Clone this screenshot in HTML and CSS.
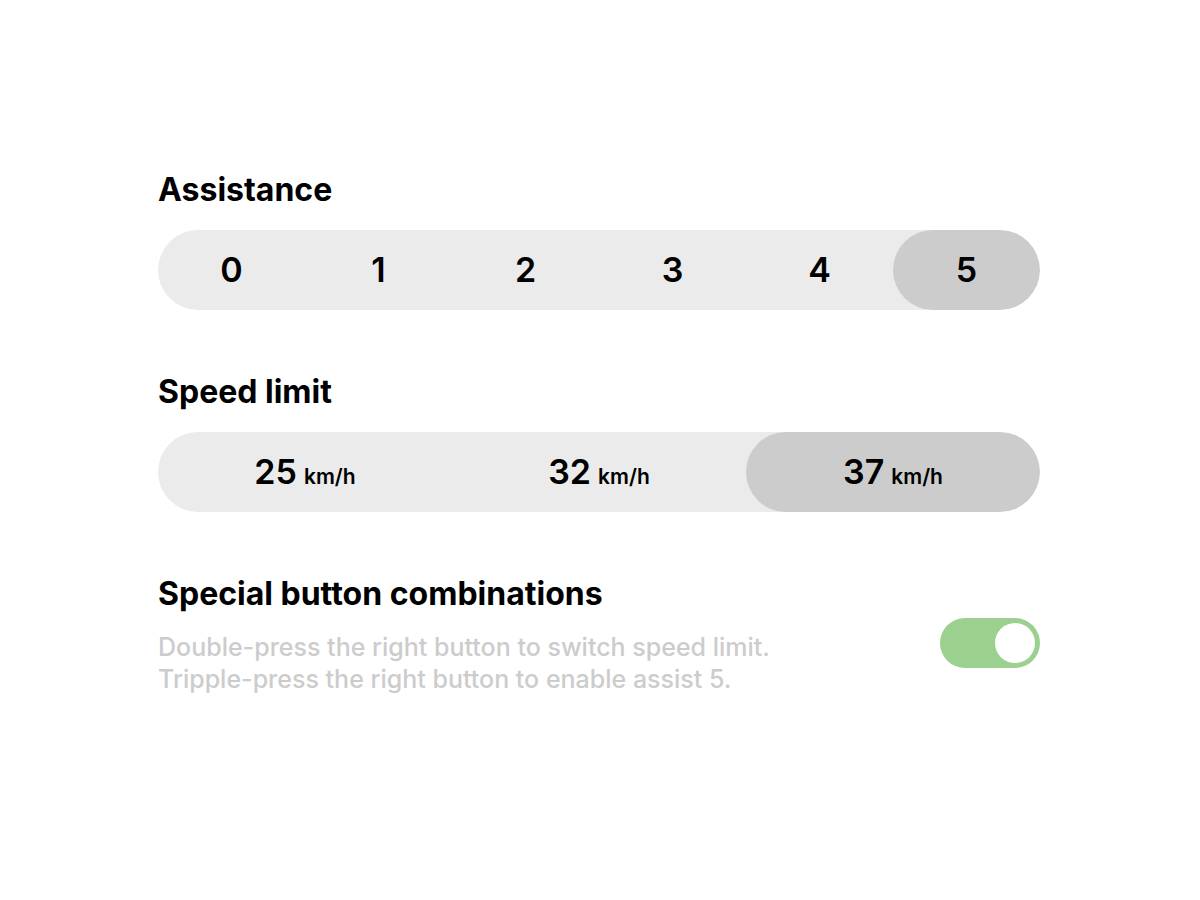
FILE: index.html
```html
<!DOCTYPE html>
<html lang="en">
<head>
<meta charset="utf-8">
<title>Settings</title>
<link rel="stylesheet" href="styles.css">
</head>
<body>
<main class="panel">
  <section class="section">
    <h2 class="title">Assistance</h2>
    <div class="segmented six">
      <div class="seg">0</div>
      <div class="seg">1</div>
      <div class="seg">2</div>
      <div class="seg">3</div>
      <div class="seg">4</div>
      <div class="seg active">5</div>
    </div>
  </section>
  <section class="section">
    <h2 class="title">Speed limit</h2>
    <div class="segmented three">
      <div class="seg">25<span class="unit">km/h</span></div>
      <div class="seg">32<span class="unit">km/h</span></div>
      <div class="seg active">37<span class="unit">km/h</span></div>
    </div>
  </section>
  <section class="section">
    <h2 class="title">Special button combinations</h2>
    <div class="combo">
      <p class="desc">Double-press the right button to switch speed limit.<br>Tripple-press the right button to enable assist 5.</p>
      <div class="toggle on"><span class="knob"></span></div>
    </div>
  </section>
</main>
</body>
</html>
```
FILE: styles.css
```css
html, body {
  margin: 0;
  padding: 0;
  background: #ffffff;
}
body {
  font-family: Inter, "Liberation Sans", sans-serif;
  color: #000;
}
.panel {
  width: 882px;
  margin-left: 158px;
  padding-top: 170px;
}
.section {
  margin-bottom: 62px;
}
.title {
  margin: 0 0 20px 0;
  font-size: 32px;
  line-height: 40px;
  font-weight: 700;
  letter-spacing: 0;
}
.segmented {
  display: grid;
  height: 80px;
  border-radius: 40px;
  background: #ebebeb;
  overflow: hidden;
}
.segmented.six { grid-template-columns: repeat(6, 1fr); }
.segmented.three { grid-template-columns: repeat(3, 1fr); }
.seg {
  display: flex;
  align-items: baseline;
  justify-content: center;
  padding-top: 20px;
  box-sizing: border-box;
  font-size: 34px;
  line-height: 40px;
  font-weight: 600;
  border-radius: 40px;
}
.seg.active {
  background: #cccccc;
}
.unit {
  font-size: 21px;
  font-weight: 600;
  margin-left: 7px;
}
.combo {
  display: flex;
  justify-content: space-between;
  align-items: flex-start;
  margin-top: -16px;
}
.desc {
  margin: 0;
  padding-top: 13px;
  font-size: 25px;
  line-height: 32px;
  color: #cccccc;
  font-weight: 500;
  letter-spacing: 0;
}
.toggle {
  position: relative;
  width: 100px;
  height: 50px;
  border-radius: 25px;
  background: #9bd08f;
}
.knob {
  position: absolute;
  top: 5px;
  right: 5px;
  width: 40px;
  height: 40px;
  border-radius: 50%;
  background: #ffffff;
}
```
